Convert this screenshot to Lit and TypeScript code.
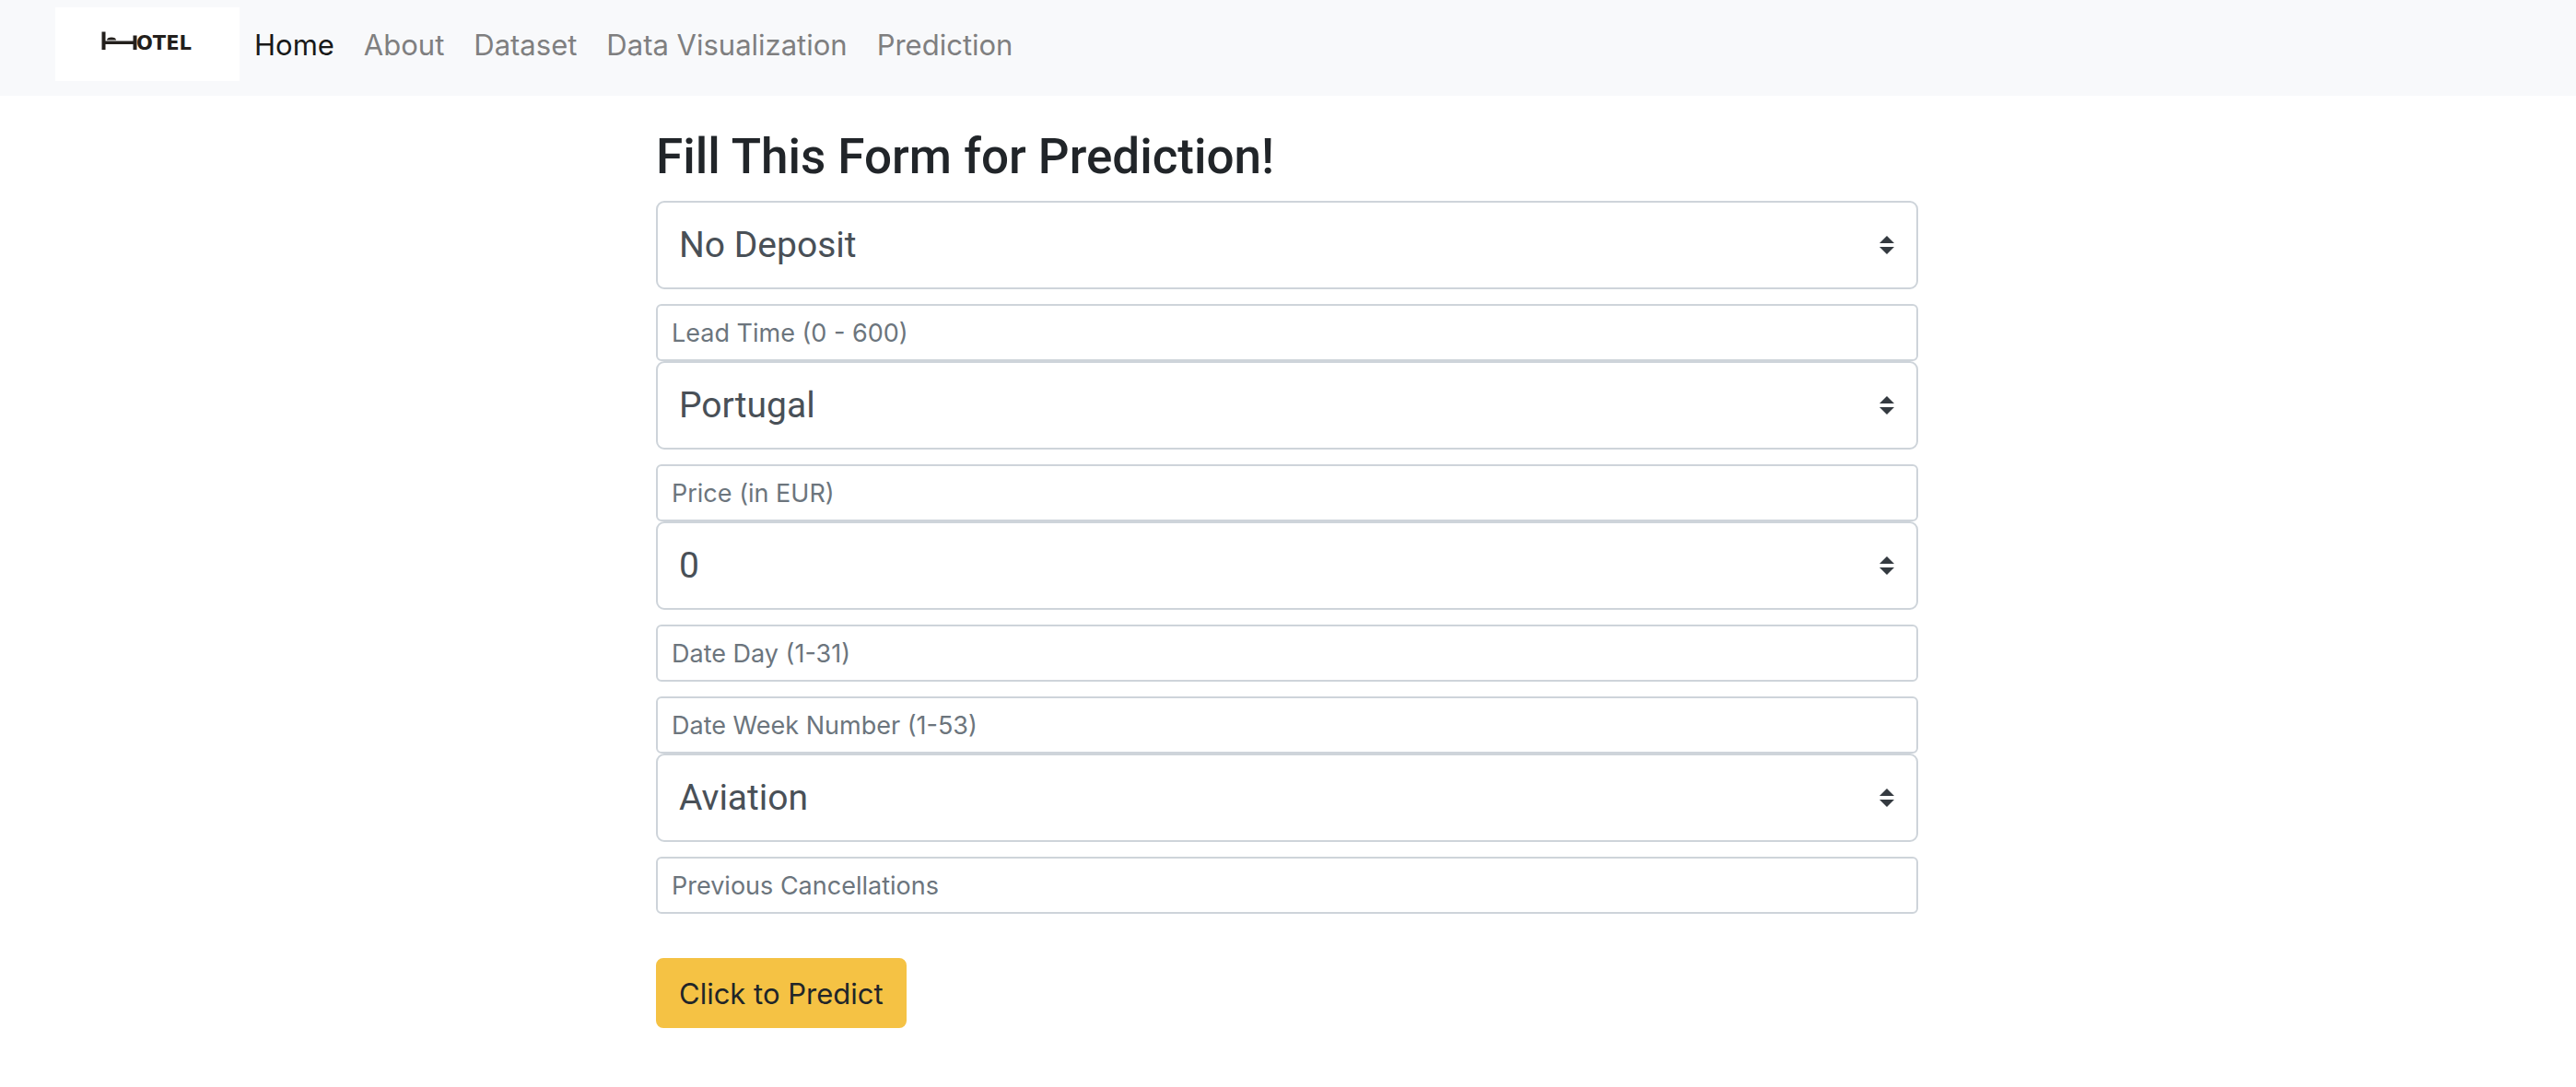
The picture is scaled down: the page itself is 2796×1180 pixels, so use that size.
import { LitElement, html, css, svg } from "lit";
import { customElement, property } from "lit/decorators.js";

type Field =
  | { kind: "select"; id: string; label: string; options: string[] }
  | { kind: "number"; id: string; label: string; joined?: boolean };

const NAV_LINKS = ["Home", "About", "Dataset", "Data Visualization", "Prediction"];

const FIELDS: Field[] = [
  { kind: "select", id: "deposit", label: "Deposit type", options: ["No Deposit", "Refundable", "Non Refund"] },
  { kind: "number", id: "lead-time", label: "Lead Time (0 - 600)", joined: true },
  { kind: "select", id: "country", label: "Country", options: ["Portugal", "Spain", "France"] },
  { kind: "number", id: "price", label: "Price (in EUR)", joined: true },
  { kind: "select", id: "requests", label: "Special requests", options: ["0", "1", "2", "3"] },
  { kind: "number", id: "day", label: "Date Day (1-31)" },
  { kind: "number", id: "week", label: "Date Week Number (1-53)", joined: true },
  { kind: "select", id: "segment", label: "Market segment", options: ["Aviation", "Corporate", "Direct"] },
  { kind: "number", id: "cancellations", label: "Previous Cancellations" },
];

@customElement("hotel-navbar")
export class HotelNavbar extends LitElement {
  @property() active = "Home";

  static styles = css`
    :host {
      display: block;
      background: #f8f9fb;
    }
    .bar {
      display: flex;
      align-items: center;
      padding: 8px 60px 16px;
    }
    .brand,
    .logo {
      display: block;
    }
    .word {
      font: 700 21px/1 "DejaVu Sans", sans-serif;
      fill: #231f1c;
    }
    .links {
      display: flex;
      margin: 0;
      padding: 0;
      list-style: none;
    }
    .link {
      display: block;
      padding: 17px 16px 15px;
      color: #7f7f80;
      font-size: 31px;
      line-height: 48px;
      text-decoration: none;
      white-space: nowrap;
    }
    .link.active {
      color: #181919;
    }
  `;

  render() {
    return html`
      <nav class="bar">
        <a class="brand" href="#home" aria-label="Hotel">
          <svg class="logo" width="200" height="80" viewBox="0 0 200 80">
            <rect width="200" height="80" fill="#fff" />
            ${svg`<path fill="#231f1c" d="M50.5 26.5h4v10h30v-6h4v15.500h-4v-6h-30v6h-4z" />
            <path fill="#231f1c" d="M56 35.500c0-2 2-3 5-3s5 1 5 3z" />`}
            <text class="word" x="88" y="46">OTEL</text>
          </svg>
        </a>
        <ul class="links">
          ${NAV_LINKS.map(
            (name) => html`<li>
              <a class="link ${name === this.active ? "active" : ""}" href="#${name.toLowerCase().replace(" ", "-")}">${name}</a>
            </li>`
          )}
        </ul>
      </nav>
    `;
  }
}

@customElement("prediction-form")
export class PredictionForm extends LitElement {
  static styles = css`
    :host {
      display: block;
      padding: 34px calc(25% + 15px) 64px calc(25% + 13px);
    }
    .title {
      margin: 0 0 16px;
      font-family: Roboto, "Liberation Sans", sans-serif;
      font-size: 53px;
      font-weight: 500;
      line-height: 64px;
    }
    .group {
      display: grid;
      margin-bottom: 16px;
    }
    .group.joined {
      margin-bottom: 0;
    }
    .group > * {
      grid-area: 1 / 1;
    }
    .select,
    .input {
      box-sizing: border-box;
      width: 100%;
      margin: 0;
      border: 2px solid #ced4da;
      background: #fff;
      color: #495057;
      font-family: inherit;
      appearance: none;
    }
    .select {
      height: 96px;
      padding: 0 56px 0 23px;
      border-radius: 9px;
      font-family: Roboto, "Liberation Sans", sans-serif;
      font-size: 39px;
    }
    .input {
      height: 62px;
      padding: 1px 15px 0;
      border-radius: 6px;
      font-size: 27px;
    }
    .input::placeholder {
      color: #6c757d;
      opacity: 1;
    }
    .caret {
      align-self: center;
      justify-self: end;
      margin-right: 26px;
      pointer-events: none;
    }
    .submit {
      height: 76px;
      margin-top: 32px;
      padding: 0 23px;
      border: 2px solid #f5c244;
      border-radius: 8px;
      background: #f5c244;
      color: #212529;
      font-family: inherit;
      font-size: 31px;
    }
  `;

  private field(f: Field) {
    if (f.kind === "select") {
      return html`<div class="group">
        <select class="select" id=${f.id} aria-label=${f.label}>
          ${f.options.map((o) => html`<option>${o}</option>`)}
        </select>
        <svg class="caret" width="16" height="20" viewBox="0 0 4 5" aria-hidden="true">
          <path fill="#343a40" d="M2 0L0 2h4zm0 5L0 3h4z" />
        </svg>
      </div>`;
    }
    return html`<div class="group ${f.joined ? "joined" : ""}">
      <input class="input" id=${f.id} type="text" inputmode="numeric" aria-label=${f.label} placeholder=${f.label} />
    </div>`;
  }

  render() {
    return html`
      <form @submit=${(e: Event) => e.preventDefault()}>
        <h2 class="title">Fill This Form for Prediction!</h2>
        ${FIELDS.map((f) => this.field(f))}
        <button class="submit" type="submit">Click to Predict</button>
      </form>
    `;
  }
}

@customElement("app-root")
export class AppRoot extends LitElement {
  static styles = css`
    :host {
      display: block;
      min-height: 100vh;
      background: #fff;
      color: #212529;
      font-family: Inter, "Liberation Sans", sans-serif;
    }
  `;

  render() {
    return html`
      <hotel-navbar active="Home"></hotel-navbar>
      <main><prediction-form></prediction-form></main>
    `;
  }
}
